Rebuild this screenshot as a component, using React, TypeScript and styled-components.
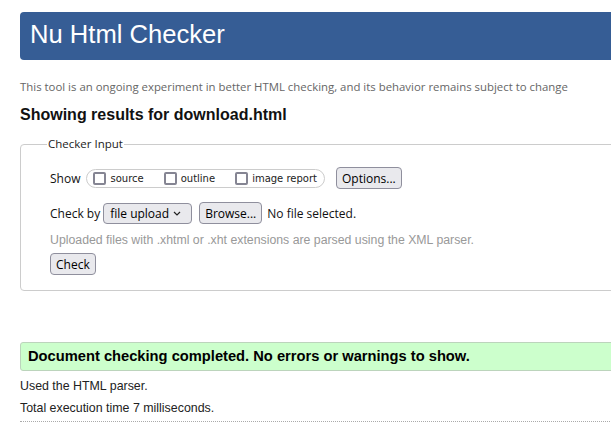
import React from 'react';
import styled, { createGlobalStyle } from 'styled-components';

const Global = createGlobalStyle`
  html, body { margin: 0; padding: 0; background: #fff; overflow: hidden; }
  body { font-family: "Liberation Sans", Arial, sans-serif; color: #222; }
`;

const Page = styled.div`
  width: 740px;
  padding: 12px 0 0 20px;
`;

const Header = styled.h1`
  margin: 0;
  height: 48px;
  box-sizing: border-box;
  padding: 0 0 0 10px;
  background: #365d95;
  border-radius: 4px;
  color: #fff;
  font: 400 25.6px/44px "Liberation Sans", Arial, sans-serif;
`;

const Intro = styled.p`
  margin: 19px 0 0;
  font: 400 11.4px/16px "Open Sans", sans-serif;
  color: #666;
`;

const Title = styled.h2`
  margin: 10px 0 0;
  font: 700 16px/20px "Liberation Sans", Arial, sans-serif;
  color: #111;
`;

const Fieldset = styled.fieldset`
  margin: 11px 0 0;
  padding: 15px 0 15px 29px;
  border: 1px solid #ccc;
  border-radius: 4px;
  min-width: 0;
`;

const Legend = styled.legend`
  padding: 0 1px;
  margin-left: -3px;
  font: 400 11.5px/16.34px "Open Sans", sans-serif;
  color: #222;
`;

const Row = styled.div<{ $top?: number }>`
  display: flex;
  align-items: center;
  margin-top: ${(p) => p.$top ?? 0}px;
  font: 400 12px "Open Sans", sans-serif;
  color: #111;
`;

const Label = styled.span`
  margin-right: 6px;
`;

const Pill = styled.div`
  display: flex;
  align-items: center;
  height: 19px;
  box-sizing: border-box;
  padding: 0 7px 0 6px;
  border: 1px solid #ccc;
  border-radius: 10px;
`;

const CheckItem = styled.label<{ $gap?: number }>`
  display: flex;
  align-items: center;
  margin-left: ${(p) => p.$gap ?? 0}px;
  font: 400 10px "DejaVu Sans", Verdana, sans-serif;
  color: #222;
`;

const Box = styled.input`
  appearance: none;
  width: 13px;
  height: 13px;
  margin: 0 4px 0 0;
  box-sizing: border-box;
  border: 2px solid #858593;
  border-radius: 2px;
  background: #fff;
`;

const Button = styled.button<{ $left?: number }>`
  height: 22px;
  box-sizing: border-box;
  margin-left: ${(p) => p.$left ?? 0}px;
  padding: 0 5px;
  background: #e9e9ed;
  border: 1px solid #8f8f9d;
  border-radius: 4px;
  font: 400 12px "Open Sans", sans-serif;
  color: #000;
`;

const SelectBox = styled.div`
  display: flex;
  align-items: center;
  justify-content: space-between;
  width: 89px;
  height: 21px;
  box-sizing: border-box;
  margin-left: 3px;
  padding: 0 10px 0 6px;
  background: #e9e9ed;
  border: 1px solid #8f8f9d;
  border-radius: 4px;
  color: #000;
`;

const FileName = styled.span`
  margin-left: 5px;
`;

const Hint = styled.p`
  margin: 8px 0 0;
  font: 400 12.3px/16px "Liberation Sans", Arial, sans-serif;
  color: #999;
`;

const Success = styled.div`
  margin-top: 51px;
  height: 29px;
  box-sizing: border-box;
  padding-left: 7px;
  background: #ccffcc;
  border: 1px solid #bcd4bc;
  border-radius: 3px;
  font: 700 14.7px/27px "Liberation Sans", Arial, sans-serif;
  color: #000;
`;

const Details = styled.div`
  margin-top: 4px;
  padding-bottom: 2px;
  border-bottom: 1px dotted #aaa;
`;

const Detail = styled.p`
  margin: 0;
  font: 400 12.4px/22px "Liberation Sans", Arial, sans-serif;
  color: #222;
`;

const Chevron = () => (
  <svg width="8" height="5" viewBox="0 0 8 5" fill="none">
    <path d="M1 1l3 3 3-3" stroke="#222" strokeWidth="1.2" />
  </svg>
);

export default function App() {
  return (
    <>
      <Global />
      <Page>
        <Header>Nu Html Checker</Header>
        <Intro>
          This tool is an ongoing experiment in better HTML checking, and its behavior remains subject to change
        </Intro>
        <Title>Showing results for download.html</Title>
        <Fieldset>
          <Legend>Checker Input</Legend>
          <Row>
            <Label>Show</Label>
            <Pill>
              <CheckItem>
                <Box type="checkbox" />
                source
              </CheckItem>
              <CheckItem $gap={20}>
                <Box type="checkbox" />
                outline
              </CheckItem>
              <CheckItem $gap={20}>
                <Box type="checkbox" />
                image report
              </CheckItem>
            </Pill>
            <Button $left={11}>Options...</Button>
          </Row>
          <Row $top={13}>
            <span>Check by</span>
            <SelectBox>
              <span>file upload</span>
              <Chevron />
            </SelectBox>
            <Button $left={7}>Browse...</Button>
            <FileName>No file selected.</FileName>
          </Row>
          <Hint>Uploaded files with .xhtml or .xht extensions are parsed using the XML parser.</Hint>
          <Row $top={5}>
            <Button>Check</Button>
          </Row>
        </Fieldset>
        <Success>Document checking completed. No errors or warnings to show.</Success>
        <Details>
          <Detail>Used the HTML parser.</Detail>
          <Detail>Total execution time 7 milliseconds.</Detail>
        </Details>
      </Page>
    </>
  );
}
